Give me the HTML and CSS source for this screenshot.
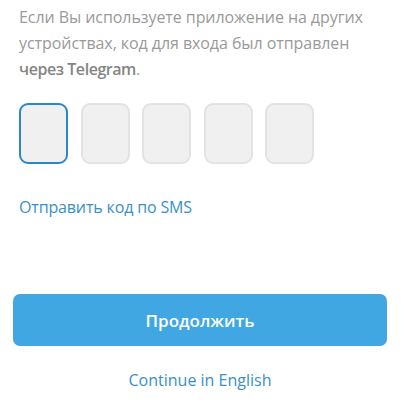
FILE: index.html
```html
<!DOCTYPE html>
<html lang="ru">
<head>
<meta charset="utf-8">
<link rel="stylesheet" href="styles.css">
</head>
<body>
<div class="page">
  <p class="info">Если Вы используете приложение на других устройствах, код для входа был отправлен <b>через Telegram</b>.</p>
  <div class="code">
    <div class="cell active"></div>
    <div class="cell"></div>
    <div class="cell"></div>
    <div class="cell"></div>
    <div class="cell"></div>
  </div>
  <a class="sms" href="#">Отправить код по SMS</a>
  <button class="btn">Продолжить</button>
  <a class="lang" href="#">Continue in English</a>
</div>
</body>
</html>
```
FILE: styles.css
```css
html, body {
  margin: 0;
  padding: 0;
  background: #fff;
}
body {
  font-family: "Open Sans", "Noto Sans", sans-serif;
}
.page {
  width: 374px;
  margin-left: 13px;
  display: flex;
  flex-direction: column;
}
.info {
  margin: 0;
  padding: 4px 6px 0;
  font-size: 16px;
  line-height: 26px;
  letter-spacing: -0.07px;
  color: #9a9a9a;
}
.info b {
  font-weight: 600;
  letter-spacing: -0.45px;
  color: #858585;
}
.code {
  display: flex;
  gap: 12.5px;
  margin: 21px 0 0 6px;
}
.cell {
  width: 49px;
  height: 61px;
  box-sizing: border-box;
  border: 2px solid #e3e3e3;
  border-radius: 9px;
  background: #f0f0f0;
}
.cell.active {
  border-color: #2a88c6;
}
.sms {
  margin: 33px 0 0 6px;
  font-size: 16px;
  line-height: 20px;
  letter-spacing: -0.15px;
  color: #3a8fc8;
  text-decoration: none;
  align-self: flex-start;
}
.btn {
  margin-top: 77px;
  height: 52px;
  border: 0;
  border-radius: 7px;
  background: #40a7e3;
  color: #fff;
  font-family: inherit;
  font-size: 17px;
  font-weight: 600;
  padding: 0;
}
.lang {
  margin-top: 24px;
  align-self: center;
  font-size: 16px;
  line-height: 20px;
  color: #3a8fc8;
  text-decoration: none;
}
```
